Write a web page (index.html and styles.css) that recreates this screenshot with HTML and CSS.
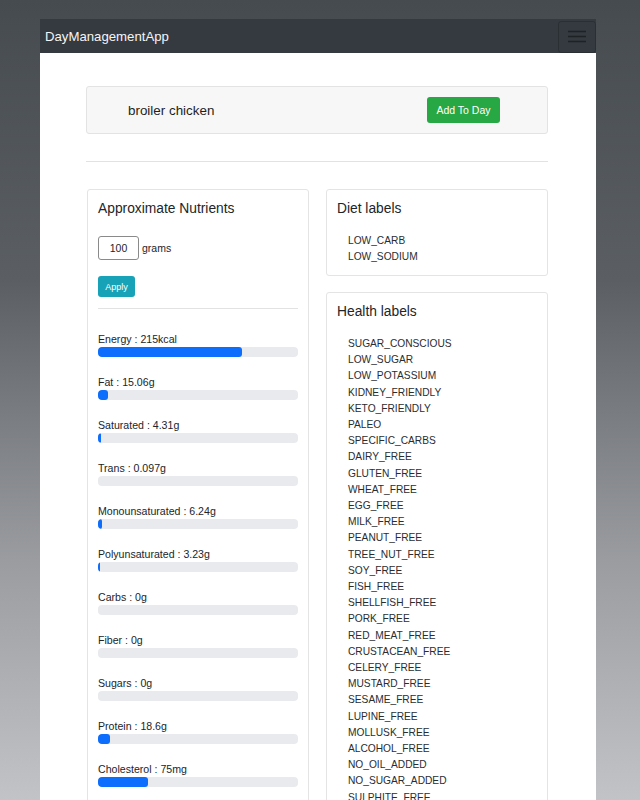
FILE: index.html
```html
<!DOCTYPE html>
<html lang="en">
<head>
<meta charset="utf-8">
<title>DayManagementApp</title>
<link rel="stylesheet" href="styles.css">
</head>
<body>
<div class="app">
  <nav class="navbar">
    <span class="brand">DayManagementApp</span>
    <button class="toggler" aria-label="menu">
      <svg width="18" height="14" viewBox="0 0 18 14"><path d="M0 1.5h18M0 6.5h18M0 11.5h18" stroke="#1f2225" stroke-width="1.6"/></svg>
    </button>
  </nav>
  <main class="content">
    <section class="food-card">
      <span class="food-name">broiler chicken</span>
      <button class="btn-add">Add To Day</button>
    </section>
    <hr class="divider">
    <div class="columns">
      <section class="card nutrients">
        <h2 class="card-title">Approximate Nutrients</h2>
        <div class="qty-row">
          <input class="qty" type="text" value="100">
          <span class="unit">grams</span>
        </div>
        <button class="btn-apply">Apply</button>
        <hr class="inner-divider">
        <ul class="nutrient-list">
          <li><div class="n-label">Energy : 215kcal</div><div class="bar"><div class="fill" style="width:72%"></div></div></li>
          <li><div class="n-label">Fat : 15.06g</div><div class="bar"><div class="fill" style="width:5%"></div></div></li>
          <li><div class="n-label">Saturated : 4.31g</div><div class="bar"><div class="fill" style="width:1.5%"></div></div></li>
          <li><div class="n-label">Trans : 0.097g</div><div class="bar"><div class="fill" style="width:0%"></div></div></li>
          <li><div class="n-label">Monounsaturated : 6.24g</div><div class="bar"><div class="fill" style="width:1.8%"></div></div></li>
          <li><div class="n-label">Polyunsaturated : 3.23g</div><div class="bar"><div class="fill" style="width:1%"></div></div></li>
          <li><div class="n-label">Carbs : 0g</div><div class="bar"><div class="fill" style="width:0%"></div></div></li>
          <li><div class="n-label">Fiber : 0g</div><div class="bar"><div class="fill" style="width:0%"></div></div></li>
          <li><div class="n-label">Sugars : 0g</div><div class="bar"><div class="fill" style="width:0%"></div></div></li>
          <li><div class="n-label">Protein : 18.6g</div><div class="bar"><div class="fill" style="width:6%"></div></div></li>
          <li><div class="n-label">Cholesterol : 75mg</div><div class="bar"><div class="fill" style="width:25%"></div></div></li>
        </ul>
      </section>
      <div class="side">
        <section class="card">
          <h2 class="card-title">Diet labels</h2>
          <ul class="label-list">
            <li>LOW_CARB</li>
            <li>LOW_SODIUM</li>
          </ul>
        </section>
        <section class="card">
          <h2 class="card-title">Health labels</h2>
          <ul class="label-list health">
            <li>SUGAR_CONSCIOUS</li>
            <li>LOW_SUGAR</li>
            <li>LOW_POTASSIUM</li>
            <li>KIDNEY_FRIENDLY</li>
            <li>KETO_FRIENDLY</li>
            <li>PALEO</li>
            <li>SPECIFIC_CARBS</li>
            <li>DAIRY_FREE</li>
            <li>GLUTEN_FREE</li>
            <li>WHEAT_FREE</li>
            <li>EGG_FREE</li>
            <li>MILK_FREE</li>
            <li>PEANUT_FREE</li>
            <li>TREE_NUT_FREE</li>
            <li>SOY_FREE</li>
            <li>FISH_FREE</li>
            <li>SHELLFISH_FREE</li>
            <li>PORK_FREE</li>
            <li>RED_MEAT_FREE</li>
            <li>CRUSTACEAN_FREE</li>
            <li>CELERY_FREE</li>
            <li>MUSTARD_FREE</li>
            <li>SESAME_FREE</li>
            <li>LUPINE_FREE</li>
            <li>MOLLUSK_FREE</li>
            <li>ALCOHOL_FREE</li>
            <li>NO_OIL_ADDED</li>
            <li>NO_SUGAR_ADDED</li>
            <li>SULPHITE_FREE</li>
          </ul>
        </section>
      </div>
    </div>
  </main>
</div>
</body>
</html>
```

FILE: styles.css
```css
html, body {
  margin: 0;
  padding: 0;
  height: 800px;
  overflow: hidden;
}
body {
  background: linear-gradient(180deg, #464b50 0%, #5b5f64 35%, #9a9ca0 70%, #c2c3c7 100%);
  font-family: "Liberation Sans", Arial, sans-serif;
  color: #212529;
}
.app {
  margin: 19px 0 0 40px;
  width: 556px;
}
.navbar {
  height: 34px;
  background: #343a40;
  display: flex;
  align-items: center;
  justify-content: space-between;
}
.brand {
  padding-left: 5px;
  font-size: 13.2px;
  color: #f4f5f6;
}
.toggler {
  width: 38px;
  height: 32px;
  margin-top: 1px;
  background: transparent;
  border: 1px solid rgba(0, 0, 0, 0.18);
  border-radius: 3px;
  display: flex;
  align-items: center;
  justify-content: center;
  padding: 0;
}
.toggler svg { display: block; }
.content {
  background: #fff;
  padding: 33px 48px 40px 46px;
  min-height: 800px;
}
.food-card {
  height: 46px;
  background: #f7f7f7;
  border: 1px solid #e3e3e3;
  border-radius: 3px;
  display: flex;
  align-items: center;
  padding-left: 41px;
  padding-right: 47px;
}
.food-name {
  font-size: 13.4px;
  color: #1d1f21;
}
.btn-add {
  margin-left: auto;
  width: 73px;
  height: 26px;
  background: #28a745;
  border: 0;
  border-radius: 3px;
  color: #fff;
  font-family: inherit;
  font-size: 10.5px;
  padding: 0;
}
.divider {
  border: 0;
  border-top: 1px solid #e2e2e2;
  margin: 27px 0 27px 0;
}
.columns {
  display: grid;
  grid-template-columns: 222px 222px;
  column-gap: 17px;
  padding-left: 1px;
  align-items: start;
}
.side {
  display: flex;
  flex-direction: column;
  gap: 16px;
}
.card {
  background: #fff;
  border: 1px solid #e4e4e4;
  border-radius: 3px;
  padding: 10px 10px 10px 10px;
}
.card-title {
  margin: 0;
  font-size: 13.8px;
  font-weight: normal;
  line-height: 17px;
  color: #212529;
}
.qty-row {
  display: flex;
  align-items: center;
  margin-top: 19px;
}
.qty {
  box-sizing: border-box;
  width: 41px;
  height: 24px;
  border: 1px solid #8a8a8a;
  border-radius: 3px;
  text-align: center;
  font-family: inherit;
  font-size: 10.5px;
  color: #212529;
  padding: 0;
}
.unit {
  margin-left: 3px;
  font-size: 10.5px;
}
.btn-apply {
  display: block;
  margin-top: 16px;
  width: 37px;
  height: 21px;
  background: #17a2b8;
  border: 0;
  border-radius: 3px;
  color: #fff;
  font-family: inherit;
  font-size: 9px;
  padding: 0;
}
.inner-divider {
  border: 0;
  border-top: 1px solid #e2e2e2;
  margin: 11px 0 22px 0;
}
.nutrient-list, .label-list {
  list-style: none;
  margin: 0;
  padding: 0;
}
.nutrient-list li {
  margin-bottom: 17px;
}
.n-label {
  font-size: 10.6px;
  line-height: 16px;
}
.bar {
  height: 10px;
  background: #e9eaee;
  border-radius: 4px;
  overflow: hidden;
}
.fill {
  height: 100%;
  background: #0d6efd;
  border-radius: 3px;
}
.label-list {
  margin-top: 16px;
  padding-left: 11px;
}
.label-list li {
  font-size: 10.2px;
  line-height: 16px;
  color: #2a2d30;
}
.health li {
  line-height: 16.2px;
}
```
